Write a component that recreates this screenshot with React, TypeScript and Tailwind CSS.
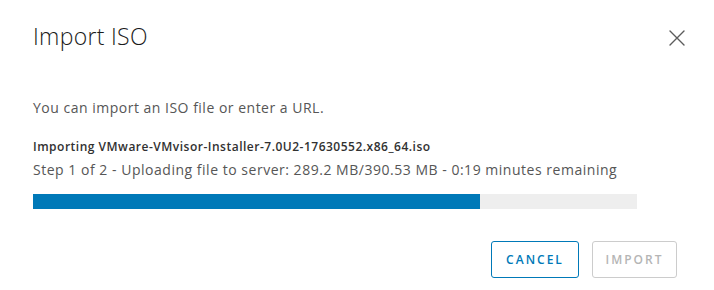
const font = { fontFamily: '"Open Sans", "Liberation Sans", sans-serif' };

function CloseIcon() {
  return (
    <svg width="16" height="16" viewBox="0 0 16 16" fill="none">
      <path
        d="M1 1 L15 15 M15 1 L1 15"
        stroke="#5c5c5c"
        strokeWidth="1.4"
        strokeLinecap="round"
      />
    </svg>
  );
}

export default function App() {
  const uploaded = 289.2;
  const total = 390.53;
  const pct = (uploaded / total) * 100;

  return (
    <div
      className="flex h-[290px] w-[714px] flex-col bg-white pl-[33px] pr-[29px] text-[#565656]"
      style={font}
    >
      {/* header */}
      <div className="flex h-[75px] items-center justify-between">
        <h1 className="mt-[-3px] text-[23px] font-light tracking-[0.3px] text-[#1b1b1b]">
          Import ISO
        </h1>
        <button className="mt-[1px]">
          <CloseIcon />
        </button>
      </div>

      {/* body */}
      <p className="mt-[23px] text-[14px] leading-[20px] tracking-[0.5px]">
        You can import an ISO file or enter a URL.
      </p>
      <p className="mt-[21px] text-[12px] font-semibold leading-[16px] tracking-[0.5px] text-[#313131]">
        Importing VMware-VMvisor-Installer-7.0U2-17630552.x86_64.iso
      </p>
      <p className="mt-[5px] text-[14px] leading-[20px] tracking-[0.52px]">
        Step 1 of 2 - Uploading file to server: 289.2 MB/390.53 MB - 0:19
        minutes remaining
      </p>
      <div className="mt-[14px] h-[15px] w-[604px] bg-[#eeeeee]">
        <div className="h-full bg-[#0079b8]" style={{ width: `${pct}%` }} />
      </div>

      {/* footer */}
      <div className="mt-[32px] flex justify-end gap-[13px] pr-[8px]">
        <button className="h-[37px] w-[88px] rounded-[3px] border border-[#0079b8] text-[12px] font-semibold tracking-[2px] text-[#0079b8]">
          CANCEL
        </button>
        <button
          disabled
          className="h-[37px] w-[85px] rounded-[3px] border border-[#cccccc] text-[12px] font-semibold tracking-[2px] text-[#b5b5b5]"
        >
          IMPORT
        </button>
      </div>
    </div>
  );
}
